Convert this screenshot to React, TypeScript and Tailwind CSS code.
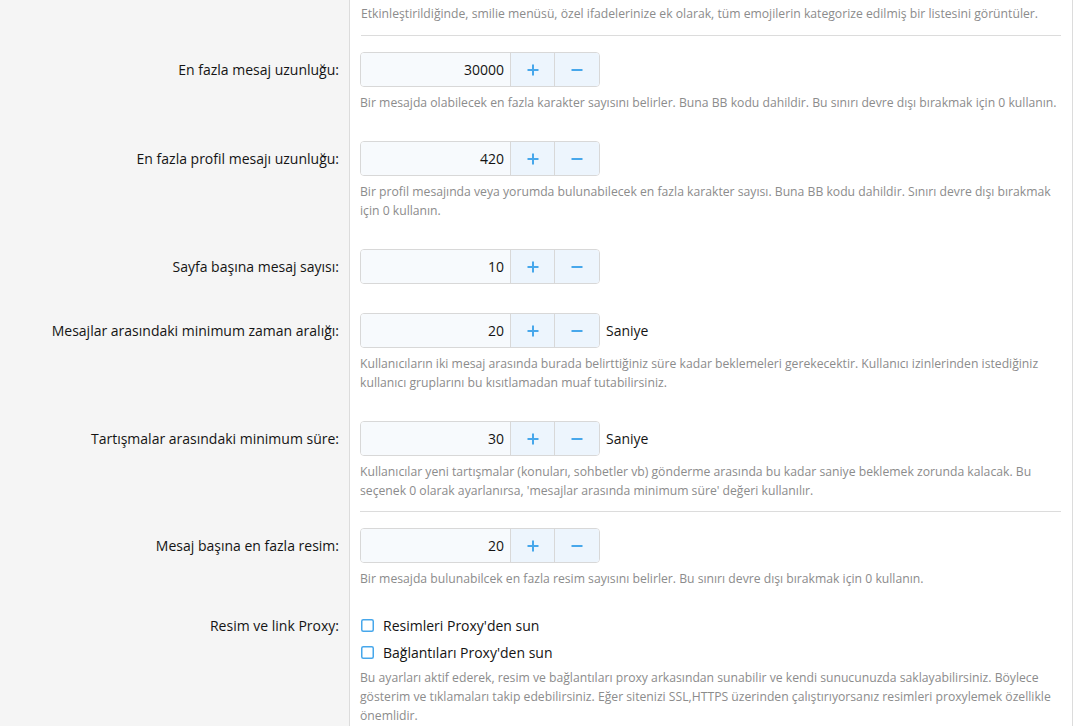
import { Fragment } from 'react';

type Row = {
  label: string;
  value?: string;
  unit?: string;
  checks?: string[];
  desc: string[];
  divider?: boolean;
};

const rows: Row[] = [
  {
    label: 'En fazla mesaj uzunluğu:',
    value: '30000',
    desc: [
      'Bir mesajda olabilecek en fazla karakter sayısını belirler. Buna BB kodu dahildir. Bu sınırı devre dışı bırakmak için 0 kullanın.',
    ],
  },
  {
    label: 'En fazla profil mesajı uzunluğu:',
    value: '420',
    desc: [
      'Bir profil mesajında veya yorumda bulunabilecek en fazla karakter sayısı. Buna BB kodu dahildir. Sınırı devre dışı bırakmak',
      'için 0 kullanın.',
    ],
  },
  { label: 'Sayfa başına mesaj sayısı:', value: '10', desc: [] },
  {
    label: 'Mesajlar arasındaki minimum zaman aralığı:',
    value: '20',
    unit: 'Saniye',
    desc: [
      'Kullanıcıların iki mesaj arasında burada belirttiğiniz süre kadar beklemeleri gerekecektir. Kullanıcı izinlerinden istediğiniz',
      'kullanıcı gruplarını bu kısıtlamadan muaf tutabilirsiniz.',
    ],
  },
  {
    label: 'Tartışmalar arasındaki minimum süre:',
    value: '30',
    unit: 'Saniye',
    desc: [
      'Kullanıcılar yeni tartışmalar (konuları, sohbetler vb) gönderme arasında bu kadar saniye beklemek zorunda kalacak. Bu',
      "seçenek 0 olarak ayarlanırsa, 'mesajlar arasında minimum süre' değeri kullanılır.",
    ],
    divider: true,
  },
  {
    label: 'Mesaj başına en fazla resim:',
    value: '20',
    desc: [
      'Bir mesajda bulunabilcek en fazla resim sayısını belirler. Bu sınırı devre dışı bırakmak için 0 kullanın.',
    ],
  },
  {
    label: 'Resim ve link Proxy:',
    checks: ["Resimleri Proxy'den sun", "Bağlantıları Proxy'den sun"],
    desc: [
      'Bu ayarları aktif ederek, resim ve bağlantıları proxy arkasından sunabilir ve kendi sunucunuzda saklayabilirsiniz. Böylece',
      'gösterim ve tıklamaları takip edebilirsiniz. Eğer sitenizi SSL,HTTPS üzerinden çalıştırıyorsanız resimleri proxylemek özellikle',
      'önemlidir.',
    ],
  },
];

function Desc({ lines }: { lines: string[] }) {
  if (!lines.length) return null;
  return (
    <div className="mt-[6px] text-[12.2px] leading-[19px] text-[#8c8c8c]">
      {lines.map((l, i) => (
        <div key={i}>{l}</div>
      ))}
    </div>
  );
}

function Spinner({ value, unit }: { value: string; unit?: string }) {
  return (
    <div className="flex items-center">
      <div className="flex h-[35px] w-[240px] overflow-hidden rounded-[4px] border border-[#d8d8d8]">
        <div className="flex w-[149px] items-center justify-end bg-[#f7fafd] pr-[6px] text-[14px] text-[#141414]">
          {value}
        </div>
        <div className="flex w-[44px] items-center justify-center border-l border-[#d8d8d8] bg-[#edf5fd]">
          <svg width="12" height="12" viewBox="0 0 12 12">
            <path d="M6 0.5v11M0.5 6h11" stroke="#47a7eb" strokeWidth="2" />
          </svg>
        </div>
        <div className="flex flex-1 items-center justify-center border-l border-[#d8d8d8] bg-[#edf5fd]">
          <svg width="12" height="12" viewBox="0 0 12 12">
            <path d="M0.5 6h11" stroke="#47a7eb" strokeWidth="2" />
          </svg>
        </div>
      </div>
      {unit && <span className="ml-[6px] text-[14px] text-[#141414]">{unit}</span>}
    </div>
  );
}

function Checkbox({ text }: { text: string }) {
  return (
    <div className="flex h-[20px] items-center text-[14px] text-[#141414]">
      <svg className="ml-[1px] mr-[9px]" width="13" height="13" viewBox="0 0 13 13">
        <rect x="0.75" y="0.75" width="11.5" height="11.5" rx="1.5" fill="#fff" stroke="#47a7eb" strokeWidth="1.5" />
      </svg>
      {text}
    </div>
  );
}

export default function App() {
  return (
    <div
      className="h-[726px] w-[1073px] overflow-hidden border-r border-[#dcdcdc] bg-white"
      style={{ fontFamily: '"Open Sans", "Noto Sans", sans-serif' }}
    >
      <div className="grid grid-cols-[350px_1fr]">
        <div className="border-r border-[#dcdcdc] bg-[#f5f5f5]" />
        <div className="pr-[11px] pl-[11px]">
          <div className="border-b border-[#dcdcdc] pt-[4px] pb-3 text-[12.2px] leading-[19px] text-[#8c8c8c]">
            Etkinleştirildiğinde, smilie menüsü, özel ifadelerinize ek olarak, tüm emojilerin kategorize edilmiş bir listesini görüntüler.
          </div>
        </div>
        {rows.map((r) => (
          <Fragment key={r.label}>
            <div
              className={`border-r border-[#dcdcdc] bg-[#f5f5f5] ${r.checks ? 'pt-[14px]' : 'pt-4'} pr-[10px] text-right`}
            >
              <div
                className={`${r.checks ? 'h-[20px]' : 'h-[35px]'} flex items-center justify-end text-[14px] text-[#141414]`}
              >
                {r.label}
              </div>
            </div>
            <div className="pr-[11px] pl-[10px]">
              <div
                className={`${r.checks ? 'pt-[14px]' : 'pt-4'} ${r.divider ? 'border-b border-[#dcdcdc] pb-[11px]' : 'pb-[13px]'}`}
              >
                {r.value && <Spinner value={r.value} unit={r.unit} />}
                {r.checks && (
                  <div className="flex flex-col gap-[7px]">
                    {r.checks.map((c) => (
                      <Checkbox key={c} text={c} />
                    ))}
                  </div>
                )}
                <Desc lines={r.desc} />
              </div>
            </div>
          </Fragment>
        ))}
      </div>
    </div>
  );
}
